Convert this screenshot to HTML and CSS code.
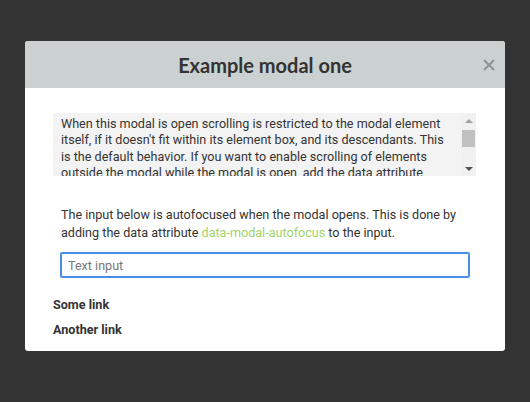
FILE: index.html
```html
<!DOCTYPE html>
<html>
<head>
<meta charset="utf-8">
<link rel="stylesheet" href="styles.css">
</head>
<body>
<div class="modal">
  <div class="modal-header">
    <h2 class="modal-title">Example modal one</h2>
    <button class="modal-close" aria-label="Close">
      <svg width="12" height="12" viewBox="0 0 12 12"><path d="M1 1 L11 11 M11 1 L1 11" stroke="#8c9392" stroke-width="2" fill="none"/></svg>
    </button>
  </div>
  <div class="modal-body">
    <div class="scroll-box">
      <div class="scroll-content">
        When this modal is open scrolling is restricted to the modal element itself, if it doesn't fit within its element box, and its descendants. This is the default behavior. If you want to enable scrolling of elements outside the modal while the modal is open, add the data attribute data-modal-scrollable to those elements.
      </div>
      <div class="scrollbar" aria-hidden="true">
        <div class="sb-btn"><span class="arrow-up"></span></div>
        <div class="sb-track"><div class="sb-thumb"></div></div>
        <div class="sb-btn"><span class="arrow-down"></span></div>
      </div>
    </div>
    <p class="info">The input below is autofocused when the modal opens. This is done by adding the data attribute <span class="hl">data-modal-autofocus</span> to the input.</p>
    <input class="text-input" type="text" placeholder="Text input">
    <ul class="links">
      <li><a href="#">Some link</a></li>
      <li><a href="#">Another link</a></li>
    </ul>
  </div>
</div>
</body>
</html>
```

FILE: styles.css
```css
html, body {
  margin: 0;
  padding: 0;
  background: #333333;
  font-family: Roboto, "Liberation Sans", sans-serif;
  color: #333;
}
body {
  height: 402px;
  overflow: hidden;
}
.modal {
  width: 480px;
  margin: 41px auto 0;
  background: #fff;
  border-radius: 3px;
  overflow: hidden;
}
.modal-header {
  position: relative;
  height: 47px;
  background: #cbd1d0;
  display: flex;
  align-items: center;
  justify-content: center;
}
.modal-title {
  margin: 0;
  font-family: Lato, "Open Sans", sans-serif;
  font-weight: 700;
  font-size: 20px;
  color: #333;
}
.modal-close {
  position: absolute;
  right: 10px;
  top: 18px;
  width: 12px;
  height: 12px;
  padding: 0;
  border: 0;
  background: none;
  display: flex;
}
.modal-body {
  padding: 25px 29px 9px 28px;
}
.scroll-box {
  display: flex;
  height: 63px;
  background: #f3f3f3;
}
.scroll-content {
  flex: 1;
  overflow: hidden;
  padding: 3px 8px 0 8px;
  font-size: 12.6px;
  line-height: 16.3px;
}
.scrollbar {
  width: 15px;
  display: flex;
  flex-direction: column;
  background: #f1f1f1;
}
.sb-btn {
  height: 15px;
  display: flex;
  align-items: center;
  justify-content: center;
}
.sb-track {
  flex: 1;
  padding-top: 2px;
}
.sb-thumb {
  height: 17px;
  margin: 0 1px;
  background: #c1c1c1;
}
.arrow-up {
  width: 0;
  height: 0;
  border-left: 4px solid transparent;
  border-right: 4px solid transparent;
  border-bottom: 4px solid #a3a3a3;
}
.arrow-down {
  width: 0;
  height: 0;
  border-left: 4px solid transparent;
  border-right: 4px solid transparent;
  border-top: 4px solid #505050;
}
.info {
  margin: 30px 0 11px;
  padding: 0 8px;
  font-size: 12.6px;
  line-height: 18px;
}
.hl {
  color: #a3d36a;
}
.text-input {
  display: block;
  box-sizing: border-box;
  width: 408px;
  height: 24px;
  margin: 0 0 0 8px;
  padding: 0 6px;
  border: 1px solid #4a90e2;
  box-shadow: 0 0 0 1px #4a90e2;
  outline: none;
  border-radius: 1px;
  font-family: Roboto, "Liberation Sans", sans-serif;
  font-size: 12.6px;
  color: #333;
}
.text-input::placeholder {
  color: #777;
}
.links {
  list-style: none;
  margin: 15px 0 0;
  padding: 0;
}
.links li {
  line-height: 24px;
}
.links a {
  font-size: 12.6px;
  font-weight: 700;
  color: #333;
  text-decoration: none;
}
```
